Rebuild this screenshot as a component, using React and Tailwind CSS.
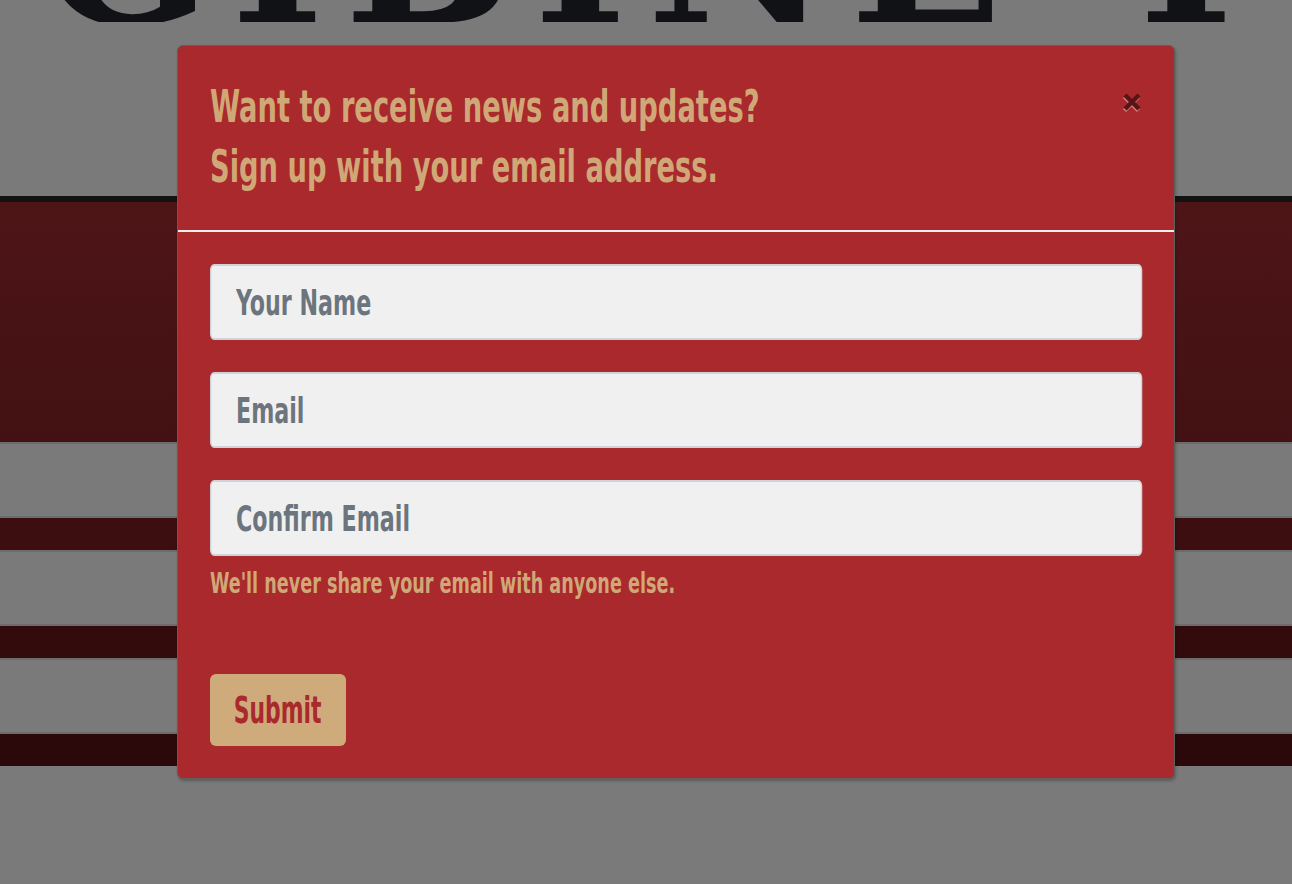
import React from "react";

const fj = { fontFamily: '"DejaVu Sans Condensed", "DejaVu Sans", sans-serif' };

function CloseIcon() {
  return (
    <svg width="22" height="22" viewBox="0 0 22 22" aria-hidden="true">
      <g transform="translate(-0.5,1.5)" stroke="#e09a9a" strokeWidth="4.5" opacity="0.75">
        <path d="M4 4 L18 18 M18 4 L4 18" />
      </g>
      <g stroke="#5a1417" strokeWidth="4.5">
        <path d="M4 4 L18 18 M18 4 L4 18" />
      </g>
    </svg>
  );
}

const inputCls =
  "h-[76px] w-[1361px] origin-left scale-x-[0.685] rounded-[6px] border-2 border-[#cfd3d9] bg-[#f0f0f0] pl-[36px] pr-[36px] text-[36px] font-bold text-[#495057] outline-none placeholder:text-[#6c757d]";

export default function App() {
  return (
    <div className="relative min-h-[884px] w-full overflow-hidden bg-[#7a7a7a]">
      {/* Background page (dimmed) */}
      <div className="flex flex-col">
        <div className="h-[22px] overflow-hidden">
          <div
            className="-mt-[147px] whitespace-nowrap pl-[40px] text-[200px] font-bold leading-none tracking-[20px] text-[#111215]"
            style={{ fontFamily: '"DejaVu Serif", "Liberation Serif", serif' }}
          >
            GIBINE T
          </div>
        </div>
        <div className="h-[174px]" />
        <div className="h-[6px] bg-[#121212]" />
        <div className="h-[240px] bg-gradient-to-b from-[#4e1517] to-[#431113]" />
        <div className="h-[76px] border-y-2 border-[#6c6c6c] bg-[#7a7a7a]" />
        <div className="h-[32px] bg-[#3c0e10]" />
        <div className="h-[76px] border-y-2 border-[#6c6c6c] bg-[#7a7a7a]" />
        <div className="h-[32px] bg-[#330b0d]" />
        <div className="h-[76px] border-y-2 border-[#6c6c6c] bg-[#7a7a7a]" />
        <div className="h-[32px] bg-[#2b090a]" />
      </div>

      {/* Modal */}
      <div
        className="absolute left-[177px] top-[45px] w-[998px] rounded-[6px] border border-[#5f5f5f] bg-[#a9292d] shadow-[1px_2px_3px_rgba(0,0,0,0.25)]"
        style={fj}
      >
        <div className="flex items-start justify-between border-b-2 border-[#eeeeee] px-8 pb-[33px] pt-[31px]">
          <h2 className="text-[45px] font-bold leading-[60px] text-[#d0a877]">
            <span className="inline-block origin-left scale-x-[0.675] whitespace-nowrap">
              Want to receive news and updates?
              <br />
              Sign up with your email address.
            </span>
          </h2>
          <button className="mt-[14px] -mr-[1px]" aria-label="Close">
            <CloseIcon />
          </button>
        </div>
        <form className="flex flex-col px-8 pb-[32px] pt-[32px]" onSubmit={(e) => e.preventDefault()}>
          <div className="mb-[32px] w-full">
            <input className={inputCls} placeholder="Your Name" />
          </div>
          <div className="mb-[32px] w-full">
            <input className={inputCls} placeholder="Email" />
          </div>
          <div className="w-full">
            <input className={inputCls} placeholder="Confirm Email" />
          </div>
          <p className="mt-[8px] text-[29px] font-bold leading-[38px] text-[#d0a877]">
            <span className="inline-block origin-left scale-x-[0.675] whitespace-nowrap">
              We'll never share your email with anyone else.
            </span>
          </p>
          <div className="mt-[72px]">
            <button
              type="submit"
              className="flex h-[72px] w-[136px] items-center justify-center rounded-[6px] bg-[#cfab7c] text-[38px] font-bold text-[#a9292d]"
            >
              <span className="inline-block origin-center scale-x-[0.64] whitespace-nowrap">Submit</span>
            </button>
          </div>
        </form>
      </div>
    </div>
  );
}
